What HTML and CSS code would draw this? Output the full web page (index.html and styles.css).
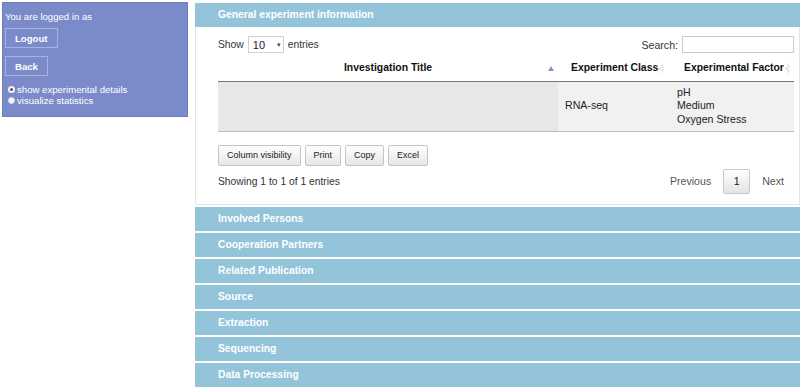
FILE: index.html
```html
<!DOCTYPE html>
<html lang="en">
<head>
  <meta charset="UTF-8">
  <title>Experiment details</title>
  <link rel="stylesheet" href="styles.css">
</head>
<body>
  <div class="page">
    <div class="sidebar">
      <div class="logged">You are logged in as</div>
      <button class="side-btn">Logout</button>
      <button class="side-btn">Back</button>
      <div class="radios">
        <label><span class="dot on"></span>show experimental details</label>
        <label><span class="dot"></span>visualize statistics</label>
      </div>
    </div>

    <div class="main">
      <div class="acc-head">General experiment information</div>
      <div class="acc-body">
        <div class="dt-top">
          <div class="length">Show <span class="select">10 <span class="caret">&#9662;</span></span> entries</div>
          <div class="search">Search: <span class="search-box"></span></div>
        </div>

        <table class="dt">
          <thead>
            <tr>
              <th class="c1 sorted">Investigation Title</th>
              <th class="c2 sortable">Experiment Class</th>
              <th class="c3 sortable">Experimental Factor</th>
            </tr>
          </thead>
          <tbody>
            <tr>
              <td class="c1"></td>
              <td class="c2">RNA-seq</td>
              <td class="c3">pH<br>Medium<br>Oxygen Stress</td>
            </tr>
          </tbody>
        </table>

        <div class="dt-buttons">
          <button class="dt-btn">Column visibility</button>
          <button class="dt-btn">Print</button>
          <button class="dt-btn">Copy</button>
          <button class="dt-btn">Excel</button>
        </div>

        <div class="dt-bottom">
          <div class="info">Showing 1 to 1 of 1 entries</div>
          <div class="paging">
            <span class="pg">Previous</span>
            <span class="pg current">1</span>
            <span class="pg">Next</span>
          </div>
        </div>
      </div>

      <div class="acc-head">Involved Persons</div>
      <div class="acc-head">Cooperation Partners</div>
      <div class="acc-head">Related Publication</div>
      <div class="acc-head">Source</div>
      <div class="acc-head">Extraction</div>
      <div class="acc-head">Sequencing</div>
      <div class="acc-head">Data Processing</div>
    </div>
  </div>
</body>
</html>
```

FILE: styles.css
```css
body{margin:0;font-family:"Liberation Sans",Arial,sans-serif;font-size:10.3px;color:#333;background:#fff}
.page{display:flex;align-items:flex-start;gap:7px;padding:2px 0 0 2px}

/* linke leiste */
.sidebar{width:184px;height:113px;background:#7b8bc9;border:1px solid #6e7fc0;color:#fff;font-size:9.6px}
.logged{padding:9px 0 0 2px;line-height:10px}
.side-btn{display:block;margin:6px 0 0 2px;height:20px;padding:0 9px;background:transparent;
          border:1px solid #a8b2e0;color:#fff;font:bold 9.6px "Liberation Sans",Arial,sans-serif}
.side-btn + .side-btn{margin-top:8px}
.radios{margin:8px 0 0 5px;line-height:11px}
.radios label{display:flex;align-items:center;gap:2px}
.dot{width:7px;height:7px;border-radius:50%;background:#f4f4f4;box-sizing:border-box;border:1px solid #dde}
.dot.on{border:2px solid #f4f4f4;background:#555}

/* accordion */
.main{flex:1;padding-top:1px}
.acc-head{height:24px;line-height:24px;background:#93c4da;color:#fff;font-weight:bold;font-size:10.3px;
          padding-left:23px;margin-bottom:2px}
.acc-body{border:1px solid #e4e4e4;border-top:0;margin-top:-2px;padding:9px 5px 10px 22px;background:#fff;
          margin-bottom:2px}

.dt-top{display:flex;justify-content:space-between;align-items:center;height:17px}
.length{display:flex;align-items:center;gap:4px}
.select{display:inline-flex;align-items:center;justify-content:space-between;width:28px;height:15px;
        border:1px solid #d0d0d0;padding:0 2px 0 4px;font-size:11px;color:#222}
.caret{font-size:7px;color:#444}
.search{display:flex;align-items:center;gap:4px;font-size:10.6px}
.search-box{width:110px;height:15px;border:1px solid #ccc}

.dt{width:100%;border-collapse:collapse;margin-top:5px;table-layout:fixed}
.dt th,.dt td{box-sizing:border-box}
.dt th{height:23px;font-weight:bold;font-size:10.4px;color:#111;border-bottom:1px solid #777;position:relative;
       padding:0 0 3px;white-space:nowrap}
.dt td{height:50px;vertical-align:middle;font-size:10.6px;color:#222;line-height:13.5px;padding:0 0 0 7px;
       background:#f1f1f1;border-bottom:1px solid #bbb}
.dt td.c1{background:#e7e7e7}
.dt td.c3{padding-left:9px}
.dt .c1{width:340px}
.dt .c2{width:110px}
.dt th.c2{text-align:left;padding-left:13px}
.dt th.c3{text-align:left;padding-left:16px}
.dt th.sorted::after{content:"";position:absolute;right:4px;top:5px;border:3.5px solid transparent;
                     border-bottom:5px solid #8c8dc4}
.dt th.sortable::after{content:"";position:absolute;right:4px;top:5px;width:5px;height:11px;background:#dcdcdc;
  clip-path:polygon(50% 0,100% 40%,0 40%,0 60%,100% 60%,50% 100%)}

.dt-buttons{display:flex;gap:4px;margin-top:13px}
.dt-btn{height:21px;padding:0 8px;border:1px solid #c4c4c4;border-radius:2px;
        background:linear-gradient(#fff,#e6e6e6);font:9px "Liberation Sans",Arial,sans-serif;color:#222}

.dt-bottom{display:flex;justify-content:space-between;align-items:center;margin-top:3px;height:25px}
.info{font-size:10.3px}
.paging{display:flex;align-items:center;margin-right:10px}
.pg{padding:0 12px;color:#555;font-size:10.6px}
.pg:last-child{padding-right:0}
.pg.current{padding:0;width:25px;height:23px;line-height:23px;text-align:center;color:#222;
            border:1px solid #c8c8c8;border-radius:2px;background:linear-gradient(#fff,#e4e4e4)}
```
